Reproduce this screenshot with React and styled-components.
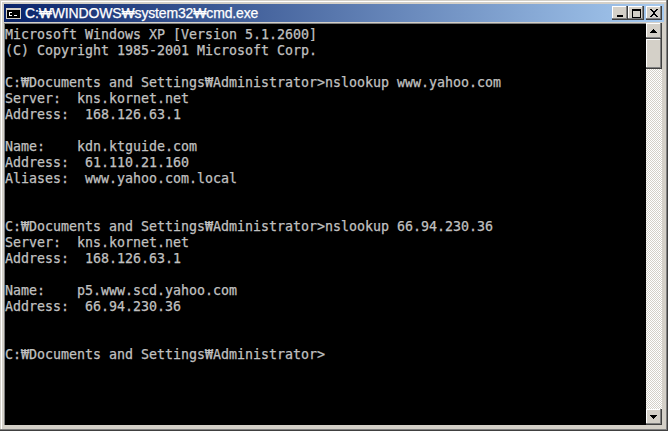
import React from "react";
import styled, { createGlobalStyle } from "styled-components";

const Global = createGlobalStyle`
  html, body { margin: 0; padding: 0; background: #d4d0c8; overflow: hidden; }
`;
const Window = styled.div`
  box-sizing: border-box; width: 668px; height: 431px; display: flex; flex-direction: column;
  background: #d4d0c8; padding: 4px 4px 4px 4px;
  box-shadow: inset -1px -1px 0 #404040, inset -2px -2px 0 #808080, inset 1px 1px 0 #d4d0c8, inset 2px 2px 0 #fff;
`;
const TitleBar = styled.div`
  height: 18px; flex: none; display: flex; align-items: center; padding: 0 2px;
  background: linear-gradient(90deg, #0a246a 0%, #a6caf0 100%);
`;
const AppIcon = styled.svg`
  flex: none; margin-right: 4px;
`;
const TitleText = styled.div`
  flex: 1; color: #fff; font: 14px/18px "Liberation Sans", sans-serif; letter-spacing: -0.15px; white-space: nowrap;
  -webkit-text-stroke: 0.25px #fff;
`;
const CtlBtn = styled.div`
  box-sizing: border-box; width: 16px; height: 14px; background: #d4d0c8; display: flex; align-items: center; justify-content: center;
  margin-left: ${p => p.$gap}px;
  box-shadow: inset -1px -1px 0 #404040, inset -2px -2px 0 #808080, inset 1px 1px 0 #fff;
`;
const Body = styled.div`
  flex: 1; min-height: 0; display: flex; margin: 1px 2px 2px 0;
`;
const Console = styled.div`
  flex: 1; background: #000; padding: 3px 0 0 0; overflow: hidden;
  border-top: 1px solid #808080; border-left: 1px solid #808080;
`;
const Line = styled.div`
  height: 16px; white-space: pre; color: #c0c0c0;
  font: 13.3px/16px "DejaVu Sans Mono", monospace; letter-spacing: -0.007px;
  -webkit-text-stroke: 0.25px #c0c0c0;
`;
const ScrollBar = styled.div`
  width: 16px; flex: none; display: flex; flex-direction: column;
  background-image: conic-gradient(#d4d0c8 25%, #fff 0 50%, #d4d0c8 0 75%, #fff 0);
  background-size: 2px 2px;
`;
const ScrollBtn = styled.div`
  box-sizing: border-box; width: 16px; height: ${p => p.$h}px; flex: none; background: #d4d0c8; display: flex; align-items: center; justify-content: center;
  box-shadow: inset -1px -1px 0 #404040, inset -2px -2px 0 #808080, inset 1px 1px 0 #fff;
`;
const Spacer = styled.div`flex: 1;`;

const lines = [
  "Microsoft Windows XP [Version 5.1.2600]",
  "(C) Copyright 1985-2001 Microsoft Corp.",
  "",
  "C:₩Documents and Settings₩Administrator>nslookup www.yahoo.com",
  "Server:  kns.kornet.net",
  "Address:  168.126.63.1",
  "",
  "Name:    kdn.ktguide.com",
  "Address:  61.110.21.160",
  "Aliases:  www.yahoo.com.local",
  "",
  "",
  "C:₩Documents and Settings₩Administrator>nslookup 66.94.230.36",
  "Server:  kns.kornet.net",
  "Address:  168.126.63.1",
  "",
  "Name:    p5.www.scd.yahoo.com",
  "Address:  66.94.230.36",
  "",
  "",
  "C:₩Documents and Settings₩Administrator>",
];

const Glyph = ({ d, w = 10, h = 9 }) => (
  <svg width={w} height={h} viewBox={`0 0 ${w} ${h}`} shapeRendering="crispEdges"><path d={d} fill="#000" /></svg>
);

export default function App() {
  return (
    <Window>
      <Global />
      <TitleBar>
        <AppIcon width="15" height="11" viewBox="0 0 15 11" shapeRendering="crispEdges">
          <rect x="0" y="0" width="15" height="11" fill="#d4d0c8" />
          <rect x="1" y="2" width="13" height="8" fill="#000" />
          <path d="M3 4h3v1H3zM3 5h1v2H3zM3 7h3v1H3zM8 7h3v1H8z" fill="#fff" />
        </AppIcon>
        <TitleText>C:₩WINDOWS₩system32₩cmd.exe</TitleText>
        <CtlBtn $gap={0}><Glyph d="M2 6h6v2H2z" /></CtlBtn>
        <CtlBtn $gap={0}><Glyph d="M1 0h9v2H1zM1 2h1v6H1zM9 2h1v6H9zM1 8h9v1H1z" /></CtlBtn>
        <CtlBtn $gap={2}><Glyph d="M1 0h2v1h1v1h2V1h1V0h2v1H8v1H7v1H6v2h1v1h1v1h1v1H7V7H6V6H4v1H3v1H1V7h1V6h1V5h1V3H3V2H2V1H1z" /></CtlBtn>
      </TitleBar>
      <Body>
        <Console>{lines.map((l, i) => <Line key={i}>{l}</Line>)}</Console>
        <ScrollBar>
          <ScrollBtn $h={16}><Glyph d="M4 2h1v1h1v1h1v1h1v1H1V5h1V4h1V3h1z" /></ScrollBtn>
          <ScrollBtn $h={30} />
          <Spacer />
          <ScrollBtn $h={16}><Glyph d="M1 2h7v1H7v1H6v1H5v1H4V5H3V4H2V3H1z" /></ScrollBtn>
        </ScrollBar>
      </Body>
    </Window>
  );
}
